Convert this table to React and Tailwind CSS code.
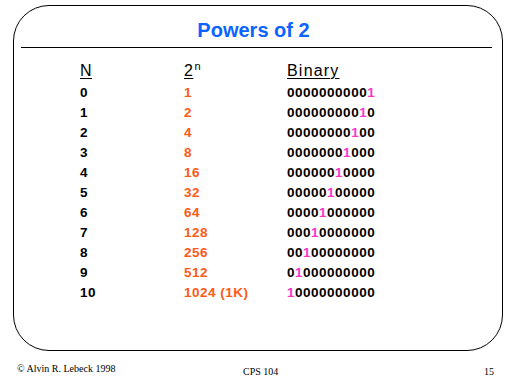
import React from "react";

const rows = [
  ["0", "1", 10],
  ["1", "2", 9],
  ["2", "4", 8],
  ["3", "8", 7],
  ["4", "16", 6],
  ["5", "32", 5],
  ["6", "64", 4],
  ["7", "128", 3],
  ["8", "256", 2],
  ["9", "512", 1],
  ["10", "1024 (1K)", 0],
];

function Binary({ pos }) {
  const chars = [];
  for (let i = 0; i < 11; i++) {
    if (i === pos) {
      chars.push(
        <span key={i} className="text-[#ff33cc]">
          1
        </span>
      );
    } else {
      chars.push(<span key={i}>0</span>);
    }
  }
  return <span>{chars}</span>;
}

export default function App() {
  return (
    <div className="w-[512px] h-[384px] bg-white overflow-hidden" style={{ fontFamily: '"Liberation Sans", Arial, sans-serif' }}>
      <div className="ml-[13px] mt-[5px] w-[490px] h-[346px] border border-black rounded-[36px] flex flex-col">
        <div className="mt-[14px] pr-[9px] text-center text-[20px] leading-[20px] font-bold text-[#0a64ff]">
          Powers of 2
        </div>
        <div className="ml-[7px] mt-[7px] w-[471px] h-px bg-black" />
        <div className="mt-[13px] pl-[66px] grid grid-cols-[104px_103px_auto]">
          <div className="text-[16px] leading-[20px] tracking-[0.5px] text-black">
            <span className="underline underline-offset-2 decoration-1">N</span>
          </div>
          <div className="text-[16px] leading-[20px] tracking-[0.5px] text-black">
            <span className="underline underline-offset-2 decoration-1">2</span>
            <span className="inline-block text-[11px] leading-[11px] ml-[1px] relative -top-[6px]">n</span>
          </div>
          <div className="text-[16px] leading-[20px] tracking-[1.2px] text-black">
            <span className="underline underline-offset-2 decoration-1">Binary</span>
          </div>
        </div>
        <div className="mt-[2px] pl-[66px] grid grid-cols-[104px_103px_auto] text-[13.5px] leading-[20px] font-bold tracking-[0.5px]">
          {rows.map(([n, p, pos]) => (
            <React.Fragment key={n}>
              <div className="text-black">{n}</div>
              <div className="text-[#ff5a14]">{p}</div>
              <div className="text-black">
                <Binary pos={pos} />
              </div>
            </React.Fragment>
          ))}
        </div>
      </div>
      <div className="flex items-start text-[10px] leading-[12px] text-black" style={{ fontFamily: '"Liberation Serif", "Times New Roman", serif' }}>
        <div className="w-[243px] pl-[17px] mt-[12px]">© Alvin R. Lebeck 1998</div>
        <div className="mt-[15px]">CPS 104</div>
        <div className="flex-1 mt-[15px] text-right pr-[18px]">15</div>
      </div>
    </div>
  );
}
